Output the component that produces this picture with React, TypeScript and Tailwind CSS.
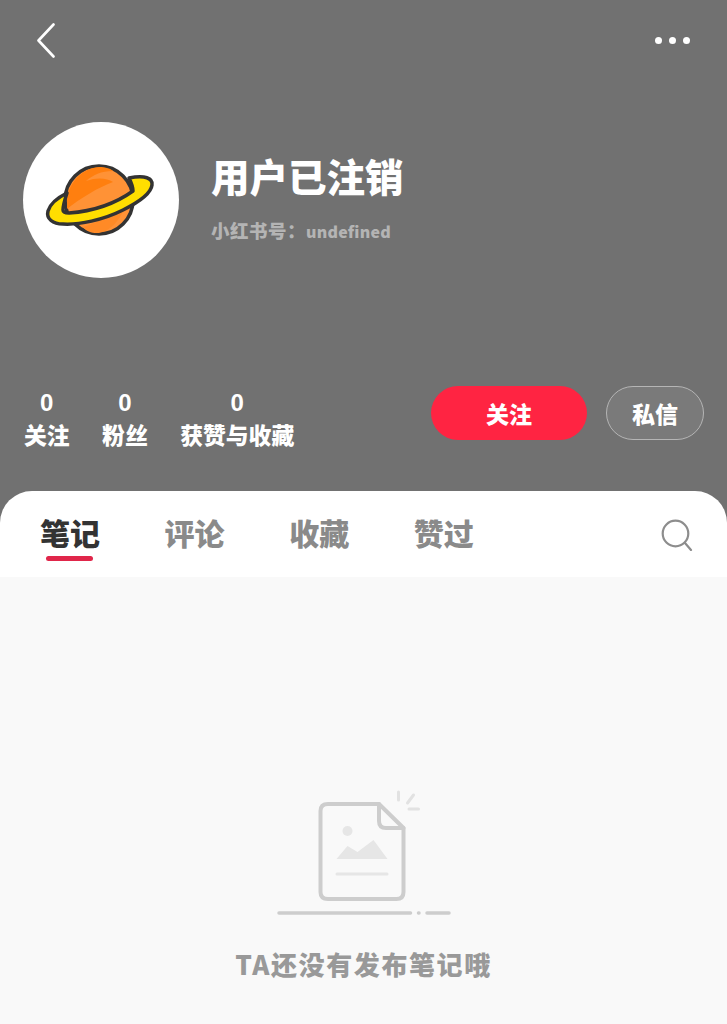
const cjk = "font-['Noto_Sans_CJK_SC','Noto_Sans',sans-serif]";

function Planet() {
  return (
    <svg width="125" height="90" viewBox="0 0 125 90" fill="none">
      <circle cx="60" cy="45" r="34" fill="#ff9236" stroke="#333" strokeWidth="3.5" />
      <path d="M28 44C30 27 44 13 60 12C67 12 72 14 74 16C62 16 54 20 47 26C58 22 68 23 74 27C60 32 40 44 28 54Z" fill="#ff7f0f" />
      <path d="M44 72C56 68 72 62 86 52C80 68 68 78 58 78C52 78 47 76 44 72Z" fill="#ff8a26" />
      <path d="M28 38C18 43 11 49 9 56C7 64 14 69 24 69C40 70 64 65 84 55C100 47 112 39 113 30C114 23 106 20 90 23C92 27 94 32 94 36C80 46 58 56 30 58C26 58 24 57 24 55C24 50 26 44 28 38Z" fill="#ffde00" stroke="#333" strokeWidth="3.5" strokeLinejoin="round" />
    </svg>
  );
}

function Stat({ value, label }: { value: string; label: string }) {
  return (
    <div className="flex flex-col items-center pt-[2px] text-white font-black">
      <span className="text-[24px] leading-[30px] font-['Liberation_Sans',sans-serif] font-bold">{value}</span>
      <span className="text-[22.8px] leading-[34px]">{label}</span>
    </div>
  );
}

export default function App() {
  return (
    <div className={`w-[727px] h-[1024px] overflow-hidden bg-[#717171] flex flex-col ${cjk}`}>
      <header className="h-[491px] shrink-0 flex flex-col">
        <div className="flex items-center justify-between pl-[37px] pr-[37px] pt-[23px]">
          <svg width="18" height="35" viewBox="0 0 18 35" fill="none" stroke="white" strokeWidth="2.6" strokeLinecap="round" strokeLinejoin="round">
            <path d="M16.5 1.5 L1.5 17.5 L16.5 33.5" />
          </svg>
          <div className="flex gap-[7px]">
            <span className="w-[7px] h-[7px] rounded-full bg-white" />
            <span className="w-[7px] h-[7px] rounded-full bg-white" />
            <span className="w-[7px] h-[7px] rounded-full bg-white" />
          </div>
        </div>
        <div className="flex items-center pl-[23px] mt-[64px]">
          <div className="w-[156px] h-[156px] rounded-full bg-white flex items-center justify-center">
            <Planet />
          </div>
          <div className="ml-[32px] flex flex-col -mt-[8px]">
            <h1 className="text-[38.5px] leading-[50px] font-black text-white">用户已注销</h1>
            <p className="mt-[18px] leading-[24px] font-black text-[#b4b4b4]">
              <span className="text-[18.5px] tracking-[0.5px]">小红书号：</span>
              <span className="text-[16px] tracking-[0.2px]">undefined</span>
            </p>
          </div>
        </div>
        <div className="flex items-start justify-between pl-[24px] pr-[23px] mt-[108px]">
          <div className="flex gap-[32.5px]">
            <Stat value="0" label="关注" />
            <Stat value="0" label="粉丝" />
            <Stat value="0" label="获赞与收藏" />
          </div>
          <div className="flex gap-[19px]">
            <button className="w-[156px] h-[54px] rounded-full bg-[#ff2442] text-white text-[23px] leading-[50px] font-black">关注</button>
            <button className="w-[98px] h-[54px] rounded-full border border-[#b5b5b5] bg-[#7a7a7a] text-white text-[23px] leading-[50px] font-black">私信</button>
          </div>
        </div>
      </header>

      <main className="flex-1 rounded-t-[32px] bg-white overflow-hidden flex flex-col">
        <nav className="h-[86px] shrink-0 flex items-start justify-between pl-[40px] pr-[34px] pt-[21px]">
          <div className="flex gap-[64.6px] text-[30px] leading-[40px] font-black text-[#8a8a8a]">
            <div className="relative text-[#333]">
              笔记
              <span className="absolute left-[6px] top-[44px] w-[47px] h-[5px] rounded-full bg-[#e0264a]" />
            </div>
            <span>评论</span>
            <span>收藏</span>
            <span>赞过</span>
          </div>
          <svg className="mt-[7px]" width="32" height="32" viewBox="0 0 32 32" fill="none" stroke="#8d8d8d" strokeWidth="2.2" strokeLinecap="round">
            <circle cx="14.5" cy="14.5" r="12.8" />
            <path d="M24 24 L30 31" />
          </svg>
        </nav>
        <section className="flex-1 bg-[#f9f9f9] flex flex-col items-center pt-[207px]">
          <svg width="180" height="132" viewBox="4 0 180 132" fill="none" strokeLinecap="round" strokeLinejoin="round">
            <path d="M58 20 H109 L133.5 44 V108 Q133.5 115 126.5 115 H58 Q50.5 115 50.5 108 V27 Q50.5 20 58 20 Z" stroke="#cdcdcd" strokeWidth="4" />
            <path d="M109 20 V37 Q109 44 116 44 H133.5" stroke="#cdcdcd" strokeWidth="4" />
            <circle cx="77.5" cy="47" r="5" fill="#e6e6e6" />
            <path d="M66.5 75 L77.5 62 L87.5 68 L103.5 56 L117.5 75 Z" fill="#e6e6e6" />
            <path d="M67 90 H117" stroke="#e6e6e6" strokeWidth="3" />
            <path d="M9 129 H140.5" stroke="#cdcdcd" strokeWidth="3.5" />
            <path d="M148.5 129 H149" stroke="#cdcdcd" strokeWidth="3.5" />
            <path d="M157 129 H179" stroke="#cdcdcd" strokeWidth="3.5" />
            <path d="M128.5 8 V16 M143.5 11 L137.5 19 M139 25 H148.5" stroke="#e2e2e2" strokeWidth="3" />
          </svg>
          <p className="mt-[30px] text-[26px] leading-[36px] font-black text-[#999] tracking-[1.6px]">TA还没有发布笔记哦</p>
        </section>
      </main>
    </div>
  );
}
